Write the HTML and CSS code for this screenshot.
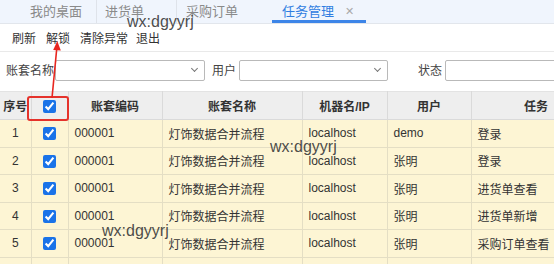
FILE: index.html
```html
<!DOCTYPE html>
<html lang="zh-CN">
<head>
<meta charset="utf-8">
<title>任务管理</title>
<link rel="stylesheet" href="styles.css">
</head>
<body>
<div class="page">
  <div class="tabs">
    <div class="tab t1">我的桌面</div>
    <div class="tab t2">进货单</div>
    <div class="tab t3">采购订单</div>
    <div class="tab t4 active">任务管理<span class="close">✕</span></div>
  </div>
  <div class="toolbar">
    <span class="btn">刷新</span>
    <span class="btn">解锁</span>
    <span class="btn">清除异常</span>
    <span class="btn">退出</span>
  </div>
  <div class="filters">
    <span class="lbl">账套名称</span>
    <div class="select s1"><span class="chev"></span></div>
    <span class="lbl l2">用户</span>
    <div class="select s2"><span class="chev"></span></div>
    <span class="lbl l3">状态</span>
    <div class="select s3"></div>
  </div>
  <div class="grid-wrap">
    <table class="grid">
      <colgroup>
        <col class="c1"><col class="c2"><col class="c3"><col class="c4"><col class="c5"><col class="c6"><col class="c7">
      </colgroup>
      <thead>
        <tr><th>序号</th><th><input type="checkbox" checked></th><th>账套编码</th><th>账套名称</th><th>机器名/IP</th><th>用户</th><th>任务</th></tr>
      </thead>
      <tbody>
        <tr><td class="num">1</td><td class="chk"><input type="checkbox" checked></td><td>000001</td><td>灯饰数据合并流程</td><td>localhost</td><td>demo</td><td>登录</td></tr>
        <tr><td class="num">2</td><td class="chk"><input type="checkbox" checked></td><td>000001</td><td>灯饰数据合并流程</td><td>localhost</td><td>张明</td><td>登录</td></tr>
        <tr><td class="num">3</td><td class="chk"><input type="checkbox" checked></td><td>000001</td><td>灯饰数据合并流程</td><td>localhost</td><td>张明</td><td>进货单查看</td></tr>
        <tr><td class="num">4</td><td class="chk"><input type="checkbox" checked></td><td>000001</td><td>灯饰数据合并流程</td><td>localhost</td><td>张明</td><td>进货单新增</td></tr>
        <tr><td class="num">5</td><td class="chk"><input type="checkbox" checked></td><td>000001</td><td>灯饰数据合并流程</td><td>localhost</td><td>张明</td><td>采购订单查看</td></tr>
        <tr class="partial"><td></td><td></td><td></td><td></td><td></td><td></td><td></td></tr>
      </tbody>
    </table>
  </div>

  <div class="redbox"></div>
  <svg class="arrow" width="20" height="60" viewBox="0 0 20 60">
    <line x1="5" y1="58" x2="10" y2="6" stroke="#e8261f" stroke-width="1.6"/>
    <polygon points="10.3,1 6.2,10 13.8,10.6" fill="#e8261f"/>
  </svg>
  <div class="wm w1">wx:dgyyrj</div>
  <div class="wm w2">wx:dgyyrj</div>
  <div class="wm w3">wx:dgyyrj</div>
</div>
</body>
</html>
```
FILE: styles.css
```css
* { box-sizing: border-box; }
html, body { margin: 0; padding: 0; background: #fff; }
body {
  font-family: "Liberation Sans", "Noto Sans CJK SC", sans-serif;
  color: #333;
  font-size: 12px;
  width: 554px;
  height: 264px;
  overflow: hidden;
}
.page { position: relative; width: 554px; height: 264px; overflow: hidden; }

.tabs {
  display: flex;
  height: 24px;
  background: #f0f5fd;
  border-bottom: 1px solid #e2e6ec;
}
.tab {
  display: flex;
  align-items: center;
  flex-shrink: 0;
  height: 23px;
  font-size: 13px;
  color: #8a8a8a;
  border-right: 1px solid #dfe3ea;
  line-height: 1;
  white-space: nowrap;
}
.tab .close { margin-left: 11px; font-size: 11px; color: #a9a9a9; }
.t1 { padding: 0 14px 0 30px; width: 97px; }
.t2 { padding-left: 8px; width: 80px; }
.t3 { padding-left: 9px; width: 95px; border-right: none; }
.t4 { padding-left: 10px; width: 94px; border-right: none; }
.tab.active {
  color: #2f7de1;
  border-bottom: 3px solid #3d85e8;
  padding-top: 3px;
}

.toolbar {
  display: flex;
  align-items: center;
  gap: 10px;
  height: 28px;
  padding: 0 0 0 12px;
  border-bottom: 1px solid #e9e9e9;
}
.btn { font-size: 12px; color: #333; line-height: 1; padding-top: 2px; white-space: nowrap; }
.btn:nth-child(4) { margin-left: -2px; }

.filters {
  display: flex;
  align-items: center;
  height: 39px;
  padding: 0 0 2px 6px;
}
.lbl { font-size: 12px; color: #444; line-height: 1; white-space: nowrap; flex-shrink: 0; }
.select {
  position: relative;
  flex-shrink: 0;
  height: 21px;
  border: 1px solid #b9b9b9;
  border-radius: 2px;
  background: #fff;
}
.s1 { width: 150px; margin-left: 1px; }
.l2 { margin-left: 7px; }
.s2 { width: 149px; margin-left: 3px; }
.l3 { margin-left: 30px; }
.s3 { width: 120px; margin-left: 3px; }
.chev {
  position: absolute;
  right: 7px;
  top: 5px;
  width: 5px;
  height: 5px;
  border-right: 1px solid #777;
  border-bottom: 1px solid #777;
  transform: rotate(45deg);
}

.grid-wrap { width: 554px; overflow: hidden; }
.grid {
  border-collapse: collapse;
  table-layout: fixed;
  width: 601px;
}
.c1 { width: 31px; } .c2 { width: 37px; } .c3 { width: 94px; } .c4 { width: 140px; }
.c5 { width: 85px; } .c6 { width: 84px; } .c7 { width: 130px; }
.grid th {
  height: 28px;
  background: #eeeeee;
  border: 1px solid #dadada;
  border-top: 1px solid #e3e3e3;
  font-weight: bold;
  font-size: 12px;
  color: #333;
  text-align: center;
  padding: 0;
  white-space: nowrap;
}
.grid th:first-child, .grid td:first-child { border-left: none; }
.grid td {
  height: 27.5px;
  background: #fdf5d4;
  border: 1px solid #e4dec4;
  padding: 0 0 0 6px;
  font-size: 12px;
  color: #333;
  white-space: nowrap;
  overflow: hidden;
}
.grid td.num { text-align: center; padding: 0; }
.grid td.chk, .grid th { text-align: center; padding: 0; }
.grid input[type="checkbox"] {
  width: 13px;
  height: 13px;
  margin: 0;
  vertical-align: middle;
  accent-color: #1a73e8;
}

.redbox {
  position: absolute;
  left: 27px;
  top: 96px;
  width: 42px;
  height: 25px;
  border: 2px solid #e5322b;
  border-radius: 3px;
}
.arrow { position: absolute; left: 47px; top: 40px; }
.wm {
  position: absolute;
  font-family: "Liberation Sans", sans-serif;
  font-size: 16px;
  color: rgba(55, 55, 55, 0.9);
  line-height: 1;
  white-space: nowrap;
}
.w1 { left: 127px; top: 14px; }
.w2 { left: 270px; top: 139px; }
.w3 { left: 102px; top: 223px; }
```
